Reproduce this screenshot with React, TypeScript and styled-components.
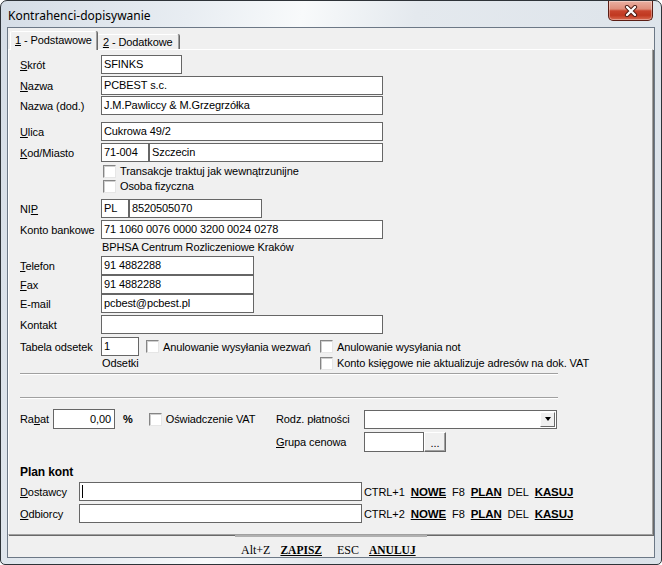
import styled, { createGlobalStyle } from "styled-components";
import React from "react";

const GlobalStyle = createGlobalStyle`
  html, body { margin: 0; padding: 0; background: #ffffff; }
  body {
    font-family: "Liberation Sans", Arial, sans-serif;
    font-size: 11px;
    letter-spacing: -0.1px;
    color: #000;
  }
  * { box-sizing: border-box; }
`;

const Window = styled.div`
  width: 662px;
  height: 565px;
  display: flex;
  flex-direction: column;
  border: 1px solid #2e3338;
  border-radius: 7px 7px 5px 5px;
  background: linear-gradient(100deg, #d5dde6 0%, #e8edf2 25%, #f8fafb 40%, #e4e9ee 55%, #dbe2e9 100%);
  overflow: hidden;
`;

const TitleBar = styled.div`
  height: 26px;
  flex-shrink: 0;
  display: flex;
  justify-content: space-between;
  align-items: center;
  padding: 2px 0 0 7px;
`;

const Title = styled.span`
  font-family: "Noto Sans", "Open Sans", sans-serif;
  font-size: 12px;
  letter-spacing: 0;
  color: #000;
`;

const CloseButton = styled.div`
  align-self: flex-start;
  margin: -2px 8px 0 0;
  width: 45px;
  height: 20px;
  border: 1px solid #5a1d14;
  border-top: none;
  border-radius: 0 0 5px 5px;
  background: linear-gradient(#eab0a2 0%, #df8d7a 42%, #c8442d 52%, #c03820 75%, #d96a51 100%);
  box-shadow: inset 0 0 0 1px rgba(255, 255, 255, 0.35);
  display: flex;
  align-items: center;
  justify-content: center;
`;

const Client = styled.div`
  flex: 1;
  margin: 0 6px 6px;
  border: 1px solid #6c7886;
  background: #f0f0f0;
  display: flex;
  flex-direction: column;
`;

const TabRow = styled.div`
  display: flex;
  align-items: flex-end;
  height: 21px;
  padding-left: 2px;
`;

const Tab = styled.div<{ $active?: boolean }>`
  position: relative;
  z-index: ${p => (p.$active ? 1 : 0)};
  height: ${p => (p.$active ? 19 : 15)}px;
  margin-bottom: ${p => (p.$active ? -1 : 0)}px;
  padding: ${p => (p.$active ? "1px 4px 0" : "0 5px")};
  border-top: 1px solid #fff;
  border-left: 1px solid #fff;
  border-right: 1px solid #a0a0a0;
  box-shadow: 1px 0 0 #696969;
  border-radius: 2px 2px 0 0;
  background: #f0f0f0;
  line-height: 14px;
  white-space: nowrap;
`;

const Panel = styled.div`
  height: 486px;
  flex-shrink: 0;
  margin-right: 1px;
  border-top: 1px solid #fff;
  border-left: 1px solid #fff;
  border-right: 1px solid #a0a0a0;
  border-bottom: 1px solid #a0a0a0;
  box-shadow: 1px 1px 0 #696969;
  padding: 5px 0 0 11px;
  display: flex;
  flex-direction: column;
`;

const Row = styled.div<{ $mt?: number; $h?: number }>`
  display: flex;
  align-items: center;
  height: ${p => p.$h ?? 19}px;
  margin-top: ${p => p.$mt ?? 0}px;
  flex-shrink: 0;
  white-space: nowrap;
`;

const Label = styled.span<{ $w?: number }>`
  width: ${p => p.$w ?? 81}px;
  flex-shrink: 0;
  white-space: nowrap;
`;

const U = styled.span`
  text-decoration: underline;
`;

const Box = styled.div<{ $w: number; $right?: boolean }>`
  width: ${p => p.$w}px;
  height: 100%;
  flex-shrink: 0;
  background: #fff;
  border: 1px solid #666;
  padding: 0 3px 0 2px;
  line-height: 17px;
  white-space: nowrap;
  overflow: hidden;
  display: flex;
  align-items: center;
  justify-content: ${p => (p.$right ? "flex-end" : "flex-start")};
`;

const Caret = styled.span`
  width: 1px;
  height: 13px;
  background: #000;
`;

const Check = styled.span`
  width: 13px;
  height: 13px;
  flex-shrink: 0;
  background: #fff;
  border: 1px solid;
  border-color: #858585 #e6e6e6 #e6e6e6 #858585;
  box-shadow: inset 1px 1px 0 #cfcfcf;
  margin-right: 4px;
`;

const CheckLabel = styled.div<{ $w?: number; $ml?: number }>`
  display: flex;
  align-items: center;
  width: ${p => (p.$w ? `${p.$w}px` : "auto")};
  margin-left: ${p => p.$ml ?? 0}px;
  flex-shrink: 0;
  white-space: nowrap;
`;

const Note = styled.span<{ $w?: number }>`
  width: ${p => (p.$w ? `${p.$w}px` : "auto")};
  padding-left: 1px;
  flex-shrink: 0;
`;

const Separator = styled.div<{ $mt: number }>`
  width: 538px;
  height: 2px;
  margin-top: ${p => p.$mt}px;
  border-top: 1px solid #a0a0a0;
  border-bottom: 1px solid #fff;
  flex-shrink: 0;
`;

const OptionsGrid = styled.div`
  display: grid;
  grid-template-columns: 256px 88px auto;
  grid-auto-rows: 20px;
  row-gap: 3px;
  align-items: center;
  margin-top: 10px;
`;

const Group = styled.div`
  display: flex;
  align-items: center;
  height: 100%;
`;

const Percent = styled.span`
  font-weight: bold;
  margin: 0 16px 0 8px;
`;

const Select = styled.div`
  width: 193px;
  height: 19px;
  background: #fff;
  border: 1px solid #666;
  display: flex;
  justify-content: flex-end;
  padding: 1px;
`;

const DropButton = styled.div`
  width: 15px;
  height: 15px;
  background: #f0f0f0;
  border: 1px solid;
  border-color: #fff #696969 #696969 #fff;
  display: flex;
  align-items: center;
  justify-content: center;
`;

const Arrow = styled.span`
  width: 0;
  height: 0;
  border-left: 3.5px solid transparent;
  border-right: 3.5px solid transparent;
  border-top: 4px solid #000;
`;

const DotsButton = styled.div`
  width: 22px;
  height: 20px;
  background: #f0f0f0;
  border: 1px solid;
  border-color: #fff #696969 #696969 #fff;
  box-shadow: inset -1px -1px 0 #a0a0a0;
  display: flex;
  align-items: flex-end;
  justify-content: center;
  padding-bottom: 3px;
  line-height: 10px;
`;

const Heading = styled.div<{ $mt: number }>`
  margin-top: ${p => p.$mt}px;
  height: 14px;
  line-height: 14px;
  font-size: 12px;
  font-weight: bold;
`;

const Shortcuts = styled.div`
  display: flex;
  align-items: center;
  gap: 6px;
  margin-left: 2px;
`;

const Key = styled.span`
  font-size: 11.5px;
  font-weight: bold;
  text-decoration: underline;
`;

const BottomBar = styled.div`
  flex: 1;
  display: flex;
  justify-content: center;
`;

const Status = styled.div`
  width: 192px;
  border-top: 2px solid #b0b0b0;
  padding: 6px 0 0 6px;
  font-family: "Liberation Serif", "Times New Roman", serif;
  font-size: 12px;
  letter-spacing: 0;
  line-height: 14px;
  white-space: nowrap;
`;

const StatusKey = styled.span<{ $ml: number }>`
  margin-left: ${p => p.$ml}px;
`;

const StatusAction = styled.span`
  margin-left: 10px;
  font-size: 11.5px;
  font-weight: bold;
  text-decoration: underline;
`;

function CloseIcon() {
  return (
    <svg width="14" height="12" viewBox="0 0 14 12">
      <path d="M3 2 L11 10 M11 2 L3 10" stroke="#4a1a12" strokeWidth="4.2" strokeLinecap="round" />
      <path d="M3 2 L11 10 M11 2 L3 10" stroke="#ffffff" strokeWidth="2.4" strokeLinecap="round" />
    </svg>
  );
}

function PlanRow({ label, accel, ctrl, focused, mt }: { label: string; accel: string; ctrl: string; focused?: boolean; mt: number }) {
  return (
    <Row $mt={mt}>
      <Label $w={59}>
        <U>{accel}</U>
        {label}
      </Label>
      <Box $w={283}>{focused ? <Caret /> : null}</Box>
      <Shortcuts>
        <span>{ctrl}</span>
        <Key>NOWE</Key>
        <span>F8</span>
        <Key>PLAN</Key>
        <span>DEL</span>
        <Key>KASUJ</Key>
      </Shortcuts>
    </Row>
  );
}

export default function App() {
  return (
    <>
      <GlobalStyle />
      <Window>
        <TitleBar>
          <Title>Kontrahenci-dopisywanie</Title>
          <CloseButton>
            <CloseIcon />
          </CloseButton>
        </TitleBar>
        <Client>
          <TabRow>
            <Tab $active>
              <U>1</U> - Podstawowe
            </Tab>
            <Tab>
              <U>2</U> - Dodatkowe
            </Tab>
          </TabRow>
          <Panel>
            <Row>
              <Label><U>S</U>krót</Label>
              <Box $w={81}>SFINKS</Box>
            </Row>
            <Row $mt={2}>
              <Label><U>N</U>azwa</Label>
              <Box $w={282}>PCBEST s.c.</Box>
            </Row>
            <Row $mt={1}>
              <Label>Nazwa (dod.)</Label>
              <Box $w={282}>J.M.Pawliccy &amp; M.Grzegrzółka</Box>
            </Row>
            <Row $mt={7}>
              <Label><U>U</U>lica</Label>
              <Box $w={282}>Cukrowa 49/2</Box>
            </Row>
            <Row $mt={2}>
              <Label><U>K</U>od/Miasto</Label>
              <Box $w={48}>71-004</Box>
              <Box $w={234}>Szczecin</Box>
            </Row>
            <Row $mt={2} $h={14}>
              <Label />
              <CheckLabel $ml={2}><Check />Transakcje traktuj jak wewnątrzunijne</CheckLabel>
            </Row>
            <Row $mt={1} $h={14}>
              <Label />
              <CheckLabel $ml={2}><Check />Osoba fizyczna</CheckLabel>
            </Row>
            <Row $mt={6}>
              <Label>NI<U>P</U></Label>
              <Box $w={28}>PL</Box>
              <Box $w={133}>8520505070</Box>
            </Row>
            <Row $mt={2}>
              <Label>Konto bankowe</Label>
              <Box $w={282}>71 1060 0076 0000 3200 0024 0278</Box>
            </Row>
            <Row $mt={1} $h={14}>
              <Label />
              <Note>BPHSA Centrum Rozliczeniowe Kraków</Note>
            </Row>
            <Row $mt={2}>
              <Label><U>T</U>elefon</Label>
              <Box $w={153}>91 4882288</Box>
            </Row>
            <Row>
              <Label><U>F</U>ax</Label>
              <Box $w={153}>91 4882288</Box>
            </Row>
            <Row>
              <Label>E-mail</Label>
              <Box $w={153}>pcbest@pcbest.pl</Box>
            </Row>
            <Row $mt={2}>
              <Label>Kontakt</Label>
              <Box $w={282} />
            </Row>
            <Row $mt={3}>
              <Label>Tabela odsetek</Label>
              <Box $w={38}>1</Box>
              <CheckLabel $ml={7} $w={174}><Check />Anulowanie wysyłania wezwań</CheckLabel>
              <CheckLabel><Check />Anulowanie wysyłania not</CheckLabel>
            </Row>
            <Row $h={14}>
              <Label />
              <Note $w={219}>Odsetki</Note>
              <CheckLabel><Check />Konto księgowe nie aktualizuje adresów na dok. VAT</CheckLabel>
            </Row>
            <Separator $mt={3} />
            <Separator $mt={22} />
            <OptionsGrid>
              <Group>
                <Label $w={33}>Ra<U>b</U>at</Label>
                <Box $w={62} $right>0,00</Box>
                <Percent>%</Percent>
                <CheckLabel><Check />Oświadczenie VAT</CheckLabel>
              </Group>
              <Label $w={88}>Rodz. płatności</Label>
              <Select>
                <DropButton>
                  <Arrow />
                </DropButton>
              </Select>
              <span />
              <Label $w={88}><U>G</U>rupa cenowa</Label>
              <Group>
                <Box $w={60} />
                <DotsButton>...</DotsButton>
              </Group>
            </OptionsGrid>
            <Heading $mt={13}>Plan kont</Heading>
            <PlanRow mt={3} accel="D" label="ostawcy" ctrl="CTRL+1" focused />
            <PlanRow mt={3} accel="O" label="dbiorcy" ctrl="CTRL+2" />
          </Panel>
          <BottomBar>
            <Status>
              <StatusKey $ml={0}>Alt+Z</StatusKey>
              <StatusAction>ZAPISZ</StatusAction>
              <StatusKey $ml={15}>ESC</StatusKey>
              <StatusAction>ANULUJ</StatusAction>
            </Status>
          </BottomBar>
        </Client>
      </Window>
    </>
  );
}
